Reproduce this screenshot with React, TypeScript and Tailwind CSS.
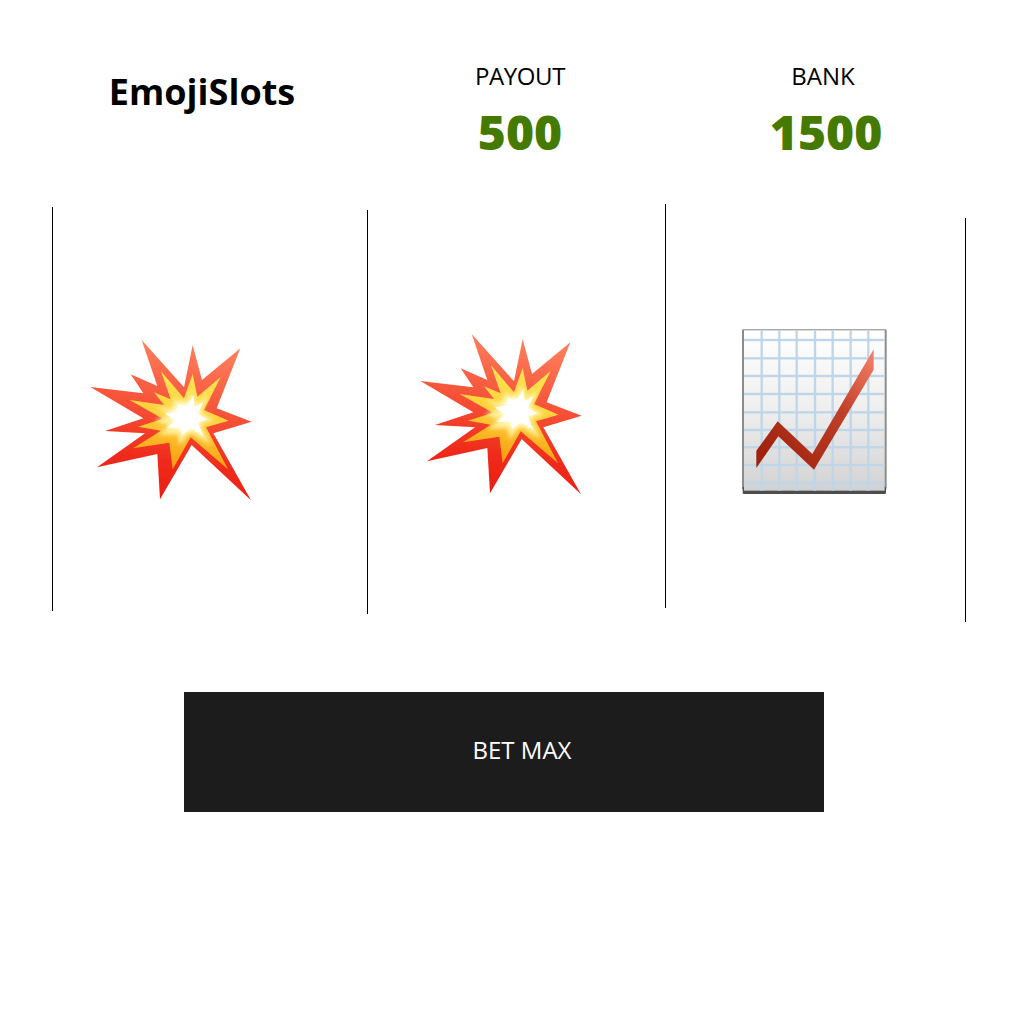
import React from 'react';

// ─── Emoji drawings ─────────────────────────────
function Burst({ id }: { id: string }) {
  return (
    <svg viewBox="0 0 540 540" className="block w-[180px] h-[180px]">
      <defs>
        <linearGradient id={`${id}-outer`} x1="0.6" y1="0" x2="0.45" y2="1">
          <stop offset="0" stopColor="#ff8360" />
          <stop offset="0.4" stopColor="#f7553a" />
          <stop offset="0.75" stopColor="#ef2c1c" />
          <stop offset="1" stopColor="#ec1c10" />
        </linearGradient>
        <linearGradient id={`${id}-mid`} x1="0.6" y1="0" x2="0.45" y2="1">
          <stop offset="0" stopColor="#ffe552" />
          <stop offset="0.5" stopColor="#ffcf3a" />
          <stop offset="1" stopColor="#f99a0c" />
        </linearGradient>
        <radialGradient id={`${id}-halo`} cx="0.5" cy="0.5" r="0.5">
          <stop offset="0" stopColor="#ffffff" />
          <stop offset="0.6" stopColor="#fffef0" />
          <stop offset="1" stopColor="#fff29a" stopOpacity="0" />
        </radialGradient>
        <filter id={`${id}-soft`} x="-5%" y="-5%" width="110%" height="110%">
          <feGaussianBlur stdDeviation="2" />
        </filter>
        <filter id={`${id}-glow`} x="-20%" y="-20%" width="140%" height="140%">
          <feGaussianBlur stdDeviation="6" />
        </filter>
      </defs>
      <g filter={`url(#${id}-soft)`}>
        <polygon
          fill={`url(#${id}-outer)`}
          points="185,30 312,172 338,45 366,150 481,55 410,235 515,275 400,310 513,511 335,345 240,508 232,372 51,412 195,310 75,303 190,265 31,171 190,190 152,133 232,168"
        />
        <polygon
          fill={`url(#${id}-mid)`}
          points="243,124 312,205 338,132 352,200 422,141 372,240 446,272 378,292 444,418 332,322 278,418 268,338 159,355 243,302 174,290 248,266 149,210 252,225 222,187 272,208"
        />
      </g>
      {/* pale star under the white core */}
      <polygon
        fill="#fff2a0"
        filter={`url(#${id}-glow)`}
        points="285,205 316,218 338,180 350,220 385,195 362,248 405,270 362,284 392,345 330,306 300,345 293,312 235,314 268,288 225,270 270,256 225,230 272,236"
      />
      <circle cx="318" cy="262" r="56" fill={`url(#${id}-halo)`} />
      <polygon
        fill="#ffffff"
        filter={`url(#${id}-soft)`}
        points="294,222 318,232 340,196 344,232 370,216 354,252 382,268 354,278 370,318 332,294 306,316 302,292 260,294 284,272 254,250 290,246"
      />
    </svg>
  );
}

function ChartUp() {
  const xs = [95, 148, 200, 255, 308, 362, 415];
  const ys = [60, 115, 168, 222, 277, 330, 382, 435, 490];
  return (
    <svg viewBox="0 0 495 540" className="block w-[165px] h-[180px]">
      <defs>
        <linearGradient id="paper" x1="0" y1="0" x2="0" y2="1">
          <stop offset="0" stopColor="#ffffff" />
          <stop offset="0.5" stopColor="#eeeeee" />
          <stop offset="1" stopColor="#d2d2d2" />
        </linearGradient>
        <linearGradient id="trend" x1="0.95" y1="0" x2="0.05" y2="1">
          <stop offset="0" stopColor="#f47f68" />
          <stop offset="0.4" stopColor="#bf3f27" />
          <stop offset="1" stopColor="#9c1f0b" />
        </linearGradient>
        <filter id="chart-soft" x="-5%" y="-5%" width="110%" height="110%">
          <feGaussianBlur stdDeviation="2" />
        </filter>
      </defs>
      <g filter="url(#chart-soft)">
        <rect x="36" y="28" width="434" height="480" rx="4" fill="#8c8c8c" />
        <rect x="38" y="500" width="430" height="22" rx="4" fill="#4d4d4d" />
        <rect x="42" y="31" width="422" height="481" fill="url(#paper)" />
        {xs.map((x) => (
          <rect key={x} x={x - 3.5} y="31" width="7" height="481" fill="#bfd6e8" />
        ))}
        {ys.map((y) => (
          <rect key={y} x="42" y={y - 3.5} width="422" height="7" fill="#bfd6e8" />
        ))}
        <polygon
          fill="url(#trend)"
          points="79,392 143,304 247,402 431,88 431,149 252,449 145,349 79,444"
        />
      </g>
    </svg>
  );
}

// ─── Main component ─────────────────────────────
export default function App() {
  return (
    <div className="w-[1024px] h-[1024px] bg-white overflow-hidden font-['Open_Sans',sans-serif] text-black">
      {/* Header */}
      <div className="flex items-start pt-[59px] h-[204px]">
        <div className="w-[404px] text-center">
          <h1 className="mt-[9px] text-[36px] leading-[48px] font-bold">EmojiSlots</h1>
        </div>
        <div className="w-[232px] text-center">
          <div className="text-[24px] leading-[34px] tracking-[-0.4px]">PAYOUT</div>
          <div className="mt-[7px] text-[48px] leading-[64px] font-extrabold text-[#457a00]">500</div>
        </div>
        <div className="w-[374px] text-center">
          <div className="text-[24px] leading-[34px]">BANK</div>
          <div className="mt-[7px] pl-[6px] text-[48px] leading-[64px] font-extrabold text-[#457a00]">1500</div>
        </div>
      </div>

      {/* Reels */}
      <div className="flex items-start pl-[52px] h-[488px]">
        <div className="w-[315px] h-[404px] mt-[3px] border-l border-black pl-[27px] pt-[123px]">
          <Burst id="a" />
        </div>
        <div className="w-[298px] h-[404px] mt-[6px] border-l border-black pl-[42px] pt-[114px]">
          <Burst id="b" />
        </div>
        <div className="w-[300px] h-[404px] border-l border-black pl-[64px] pt-[116px]">
          <ChartUp />
        </div>
        <div className="w-px h-[404px] mt-[14px] bg-black" />
      </div>

      {/* Bet button */}
      <button className="block ml-[184px] w-[640px] h-[120px] pl-[36px] pb-[4px] bg-[#1c1c1c] text-white text-[24px]">
        BET MAX
      </button>
    </div>
  );
}
